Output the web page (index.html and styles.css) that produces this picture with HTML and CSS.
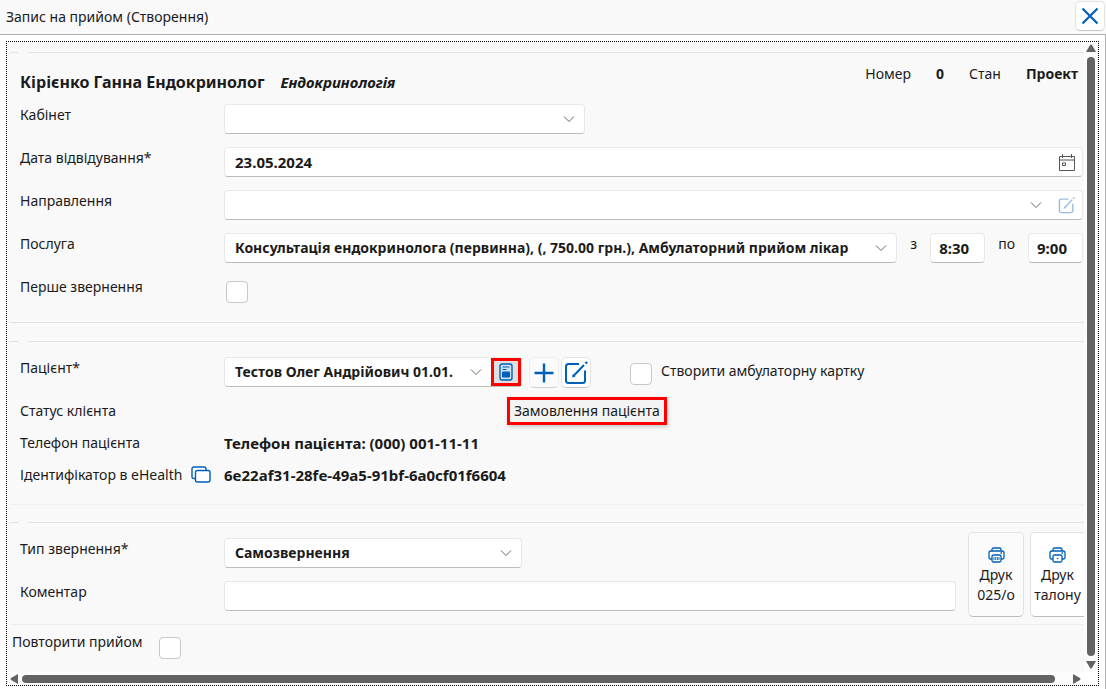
FILE: index.html
```html
<!DOCTYPE html>
<html lang="uk">
<head>
<meta charset="utf-8">
<title>Запис на прийом (Створення)</title>
<link rel="stylesheet" href="styles.css">
</head>
<body>
<svg class="sprite" aria-hidden="true">
  <symbol id="chevron" viewBox="0 0 12 8"><path d="M1 1.500l5 5 5-5" fill="none" stroke="#666" stroke-width="1"/></symbol>
  <symbol id="edit" viewBox="0 0 24 24"><path d="M15 3H4.500Q2 3 2 5.500V19.500Q2 22 4.500 22H18.500Q21 22 21 19.500V9.500" fill="none" stroke="currentColor" stroke-width="2"/><path d="M9 15.500L20 4" fill="none" stroke="currentColor" stroke-width="2"/><path d="M8 16.500l1-3.500 2.500 2.500z" fill="currentColor"/><path d="M21.500 1l1.500 1.500" stroke="currentColor" stroke-width="2.400"/></symbol>
  <symbol id="printer" viewBox="0 0 17 16"><path d="M4 4V2.500Q4 1 5.500 1h6Q13 1 13 2.500V4M4 12H2.500Q1 12 1 10.500V6Q1 4 3 4h11q2 0 2 2v4.500q0 1.500-1.500 1.500H13M12.500 6h1.500"/><rect x="4" y="8" width="9" height="7" rx="1.500"/></symbol>
</svg>
<header class="titlebar">
  <h1 class="titlebar-text">Запис на прийом (Створення)</h1>
  <button class="btn btn-close" type="button" aria-label="Закрити"><svg width="18" height="18" viewBox="0 0 18 18"><path d="M1.500 1.500l15 15M16.500 1.500l-15 15" stroke="#005fb8" stroke-width="2.200" fill="none"/></svg></button>
</header>
<main class="shell">
  <div class="frame">
    <form class="content">
      <fieldset class="section section-visit" aria-label="Запис">
        <legend class="notch"></legend>
        <div class="doctor">
          <h2 class="doctor-name">Кірієнко Ганна Ендокринолог</h2>
          <em class="doctor-spec">Ендокринологія</em>
          <dl class="meta">
            <dt>Номер</dt><dd>0</dd><dt>Стан</dt><dd>Проект</dd>
          </dl>
        </div>
        <div class="rows">
          <div class="row">
            <label class="label" for="room">Кабінет</label>
            <div class="field field-room"><select id="room" class="control"><option></option></select><svg class="chev" width="12" height="8"><use href="#chevron"/></svg></div>
          </div>
          <div class="row">
            <label class="label" for="date">Дата відвідування*</label>
            <div class="field grow"><input id="date" class="control control-number" type="text" value="23.05.2024"><button class="plain" type="button" aria-label="Календар"><svg width="16" height="17" viewBox="0 0 16 17" fill="none" stroke="#555"><path d="M.5 2.500h15v14H.5zM.5 6h15M3.500 0v4M12.500 0v4"/><path d="M3.500 9h3v2.500h-3z"/></svg></button></div>
          </div>
          <div class="row">
            <label class="label" for="ref">Направлення</label>
            <div class="field grow"><div class="pick"><select id="ref" class="control"><option></option></select><svg class="chev" width="12" height="8"><use href="#chevron"/></svg></div><button class="plain faded" type="button" aria-label="Редагувати направлення"><svg width="17" height="17"><use href="#edit"/></svg></button></div>
          </div>
          <div class="row">
            <label class="label" for="service">Послуга</label>
            <div class="field grow"><select id="service" class="control"><option>Консультація ендокринолога (первинна), (, 750.00 грн.), Амбулаторний прийом лікар</option></select><svg class="chev" width="12" height="8"><use href="#chevron"/></svg></div>
            <label class="label-time" for="from">з</label>
            <div class="field field-time"><input id="from" class="control control-number" type="text" value="8:30"></div>
            <label class="label-time" for="to">по</label>
            <div class="field field-time"><input id="to" class="control control-number" type="text" value="9:00"></div>
          </div>
          <div class="row">
            <label class="label" for="first">Перше звернення</label>
            <input id="first" class="check check-first" type="checkbox">
          </div>
        </div>
      </fieldset>

      <fieldset class="section section-patient" aria-label="Пацієнт">
        <legend class="notch"></legend>
        <div class="row row-patient">
          <label class="label" for="patient">Пацієнт*</label>
          <div class="field field-patient"><div class="pick"><select id="patient" class="control"><option>Тестов Олег Андрійович 01.01.</option></select><svg class="chev" width="12" height="8"><use href="#chevron"/></svg></div>
          <button class="order" type="button" aria-describedby="tip" aria-label="Замовлення пацієнта"><svg width="14" height="18" viewBox="0 0 14 18"><rect x="1" y="1" width="12" height="16" rx="2" fill="#cfe2f5" stroke="#005fb8" stroke-width="1.400"/><path d="M3.500 4h7M3.500 6.500h4" stroke="#005fb8" stroke-width="1.200"/><rect x="3" y="8.500" width="8" height="6" rx="1" fill="#005fb8"/></svg></button>
          <span class="tip" id="tip" role="tooltip">Замовлення пацієнта</span></div>
          <div class="actions">
            <button class="btn btn-light" type="button" aria-label="Додати пацієнта"><svg width="20" height="20" viewBox="0 0 20 20"><path d="M10 .5v19M.5 10h19" stroke="#005fb8" stroke-width="2.400"/></svg></button>
            <button class="btn" type="button" aria-label="Редагувати пацієнта"><svg width="24" height="24"><use href="#edit"/></svg></button>
          </div>
          <input id="card" class="check check-card" type="checkbox">
          <label class="label-card" for="card">Створити амбулаторну картку</label>
        </div>
        <div class="info">
          <div class="info-row"><span class="label">Статус клієнта</span></div>
          <div class="info-row"><span class="label">Телефон пацієнта</span><b class="info-value">Телефон пацієнта: (000) 001-11-11</b></div>
          <div class="info-row"><span class="label label-id">Ідентифікатор в eHealth<button class="copy" type="button" aria-label="Копіювати"><svg width="20" height="18" viewBox="0 0 20 18" fill="#fff" stroke="#005fb8" stroke-width="1.400"><path d="M4 12.500H3Q1 12.500 1 10.500V3Q1 1 3 1H13Q15 1 15 3V4"/><rect x="4.500" y="4.500" width="14.500" height="11.500" rx="2"/></svg></button></span><b class="info-value">6e22af31-28fe-49a5-91bf-6a0cf01f6604</b></div>
        </div>
      </fieldset>

      <fieldset class="section section-type" aria-label="Звернення">
        <legend class="notch"></legend>
        <div class="split">
          <div class="rows rows-type">
            <div class="row">
              <label class="label" for="type">Тип звернення*</label>
              <div class="field field-type"><select id="type" class="control"><option>Самозвернення</option></select><svg class="chev" width="12" height="8"><use href="#chevron"/></svg></div>
            </div>
            <div class="row">
              <label class="label" for="comment">Коментар</label>
              <div class="field grow"><input id="comment" class="control" type="text"></div>
            </div>
          </div>
          <div class="prints">
            <button class="print print-light" type="button"><svg width="17" height="16" viewBox="0 0 17 16" fill="none" stroke="#005fb8" stroke-width="1.300"><use href="#printer"/><path d="M6 10v3M7.700 10v3M9.400 10v3M11 10v3" stroke-width=".9"/></svg>Друк<br>025/о</button>
            <button class="print print-cut" type="button"><svg width="17" height="16" viewBox="0 0 17 16" fill="none" stroke="#005fb8" stroke-width="1.300"><use href="#printer"/><path d="M7.800 11.500h1.500"/></svg>Друк<br>талону</button>
          </div>
        </div>
      </fieldset>
      <div class="repeat">
        <label for="repeat">Повторити прийом</label>
        <input id="repeat" class="check check-repeat" type="checkbox">
      </div>
    </form>
    <div class="bar bar-v" aria-hidden="true"><svg width="10" height="8" viewBox="0 0 10 8"><path d="M0 8L4 1q1-1 2 0l4 7z" fill="#636363"/></svg><span class="thumb"></span><svg width="10" height="8" viewBox="0 0 10 8"><path d="M0 0L4 7q1 1 2 0l4-7z" fill="#636363"/></svg></div>
    <div class="bar bar-h" aria-hidden="true"><svg width="8" height="10" viewBox="0 0 8 10"><path d="M8 0L1 4q-1 1 0 2l7 4z" fill="#636363"/></svg><span class="thumb"></span><svg width="8" height="10" viewBox="0 0 8 10"><path d="M0 0l7 4q1 1 0 2l-7 4z" fill="#636363"/></svg></div>
  </div>
</main>
</body>
</html>
```

FILE: styles.css
```css
* { box-sizing: border-box; }

body {
  margin: 0;
  height: 100vh;
  display: flex;
  flex-direction: column;
  overflow: hidden;
  background: #fff;
  color: #1b1b1b;
  font: 14px/22px "Noto Sans", "Open Sans", sans-serif;
}

button, input, select { font: inherit; color: inherit; margin: 0; }
button { cursor: pointer; }
svg { display: block; flex: none; }
.sprite { position: absolute; width: 0; height: 0; }

.titlebar {
  flex: none;
  height: 35px;
  padding: 0 1px 0 6px;
  display: flex;
  align-items: center;
  justify-content: space-between;
  background: #f9f9f9;
  border-bottom: 1px solid #b0b0b0;
}
.titlebar-text { margin: 0; font-size: 14px; font-weight: 400; }

.btn {
  width: 30px;
  height: 31px;
  padding: 0;
  display: grid;
  place-items: center;
  color: #005fb8;
  background: #fff;
  border: 1px solid #e3e3e3;
  border-bottom-color: #c4c4c4;
  border-radius: 5px;
}
.btn-light { background: #fbfbfb; border-color: #f0f0f0; border-bottom-color: #d0d0d0; }
.btn-close { height: 30px; margin-bottom: 3px; }

.shell {
  flex: 1;
  min-height: 0;
  display: flex;
  padding: 6px 6px 3px;
  border-right: 1px solid #b0b0b0;
}
.frame {
  flex: 1;
  min-width: 0;
  display: grid;
  grid-template: minmax(0, 1fr) 13px / minmax(0, 1fr) 14px;
  border: 1px dotted #000;
}
.content { overflow: hidden; background: #f9f9f9; padding-top: 10px; }

.section {
  min-width: 0;
  margin: 0;
  padding: 0 1px 0 12px;
  border: 1px solid #e2e2e2;
  border-right: 0;
  border-left-color: transparent;
  border-radius: 5px 0 0 5px;
}
.section-visit { padding-bottom: 19px; }
.section-patient { margin-top: 18px; padding-top: 15px; padding-bottom: 18px; border-bottom-color: #f0f0f0; }
.section-type { margin-top: 17px; padding-right: 0; padding-top: 9px; padding-bottom: 7px; border-bottom-color: #eee; }
.notch { width: 10px; height: 1px; padding: 0; }
.section > .notch { margin-left: -2px; }

.doctor { display: flex; align-items: center; padding-top: 6px; height: 51px; }
.doctor-name { margin: 0 16px 0 0; font-size: 16px; line-height: 38px; }
.doctor-spec { font-size: 15px; font-weight: 700; }
.meta { display: flex; margin: 0 5px 16px auto; }
.meta dt { margin-right: 25px; }
.meta dd { margin: 0 25px 0 0; font-weight: 700; }
.meta dd:last-child { margin-right: 0; }

.rows { display: flex; flex-direction: column; gap: 13px; }
.row { display: flex; align-items: flex-start; }
.label { flex: none; width: 204px; }

.field {
  position: relative;
  display: flex;
  align-items: center;
  height: 30px;
  background: #fff;
  border: 1px solid #e8e8e8;
  border-bottom-color: #bdbdbd;
  border-radius: 4px;
}
.grow { flex: 1; min-width: 0; }
.field-room { width: 361px; }
.field-time { width: 55px; }
.field-type { width: 298px; }
.field-patient { width: 298px; }
.pick { position: relative; flex: 1; min-width: 0; display: flex; align-items: center; }
.control {
  flex: 1;
  width: 100%;
  min-width: 0;
  height: 28px;
  padding: 0 10px;
  border: 0;
  outline: 0;
  background: transparent;
  font-weight: 700;
  appearance: none;
}
select.control { padding-right: 32px; }
.control-number { font-size: 15px; }
.field-time .control { padding: 0 8px; }
.chev { position: absolute; right: 9px; top: 50%; margin-top: -4px; pointer-events: none; }
.label-time { margin: 0 13px; }

.plain { padding: 0 7px; border: 0; background: none; color: #005fb8; }
.faded svg { opacity: .4; }

.check {
  appearance: none;
  flex: none;
  width: 22px;
  height: 22px;
  background: #fff;
  border: 1px solid #c8c8c8;
  border-radius: 4px;
}
.check-first { margin: 5px 0 0 2px; }
.check-card { margin: 6px 9px 0 39px; }
.label-card { margin-top: 3px; }
.check-repeat { margin: 6px 0 0 16px; }

.order {
  flex: none;
  width: 30px;
  height: 28px;
  padding: 0;
  display: grid;
  place-items: center;
  background: #e0e0e0;
  border: 3px solid #f00;
}
.tip {
  position: absolute;
  z-index: 1;
  left: 282px;
  top: 39px;
  padding: 0 4px;
  white-space: nowrap;
  line-height: 22px;
  background: #f3f3f3;
  border: 3px solid #f00;
  box-shadow: 1px 2px 4px #0003;
}
.actions { display: flex; gap: 2px; margin-left: 7px; }

.info { display: flex; flex-direction: column; gap: 10px; padding-top: 12px; }
.info-row { display: flex; }
.info-value { font-size: 15px; }
.label-id { display: flex; align-items: center; gap: 9px; white-space: nowrap; }
.copy { padding: 0; border: 0; background: none; }

.split { display: flex; gap: 12px; align-items: flex-start; }
.rows-type { flex: 1; min-width: 0; padding-top: 6px; }
.prints { display: flex; gap: 6px; overflow: hidden; }
.print {
  flex: none;
  width: 56px;
  height: 85px;
  padding: 2px 0 0;
  display: block;
  line-height: 20px;
  background: #fff;
  border: 1px solid #e3e3e3;
  border-bottom-color: #bdbdbd;
  border-radius: 5px;
}
.print svg { margin: 0 auto 2px; }
.print-light { background: #fbfbfb; }
.print-cut { width: 54px; border-right: 0; border-radius: 5px 0 0 5px; }

.repeat { display: flex; align-items: flex-start; padding: 6px 5px; }

.bar { display: flex; align-items: center; gap: 4px; background: #fcfcfc; }
.bar-v { flex-direction: column; padding: 2px 0 3px; gap: 5px; }
.bar-v .thumb { width: 8px; }
.bar-h { padding: 0 3px; }
.bar-h .thumb { height: 8px; margin-right: 14px; }
.thumb { flex: 1; background: #636363; border-radius: 4px; }
```
